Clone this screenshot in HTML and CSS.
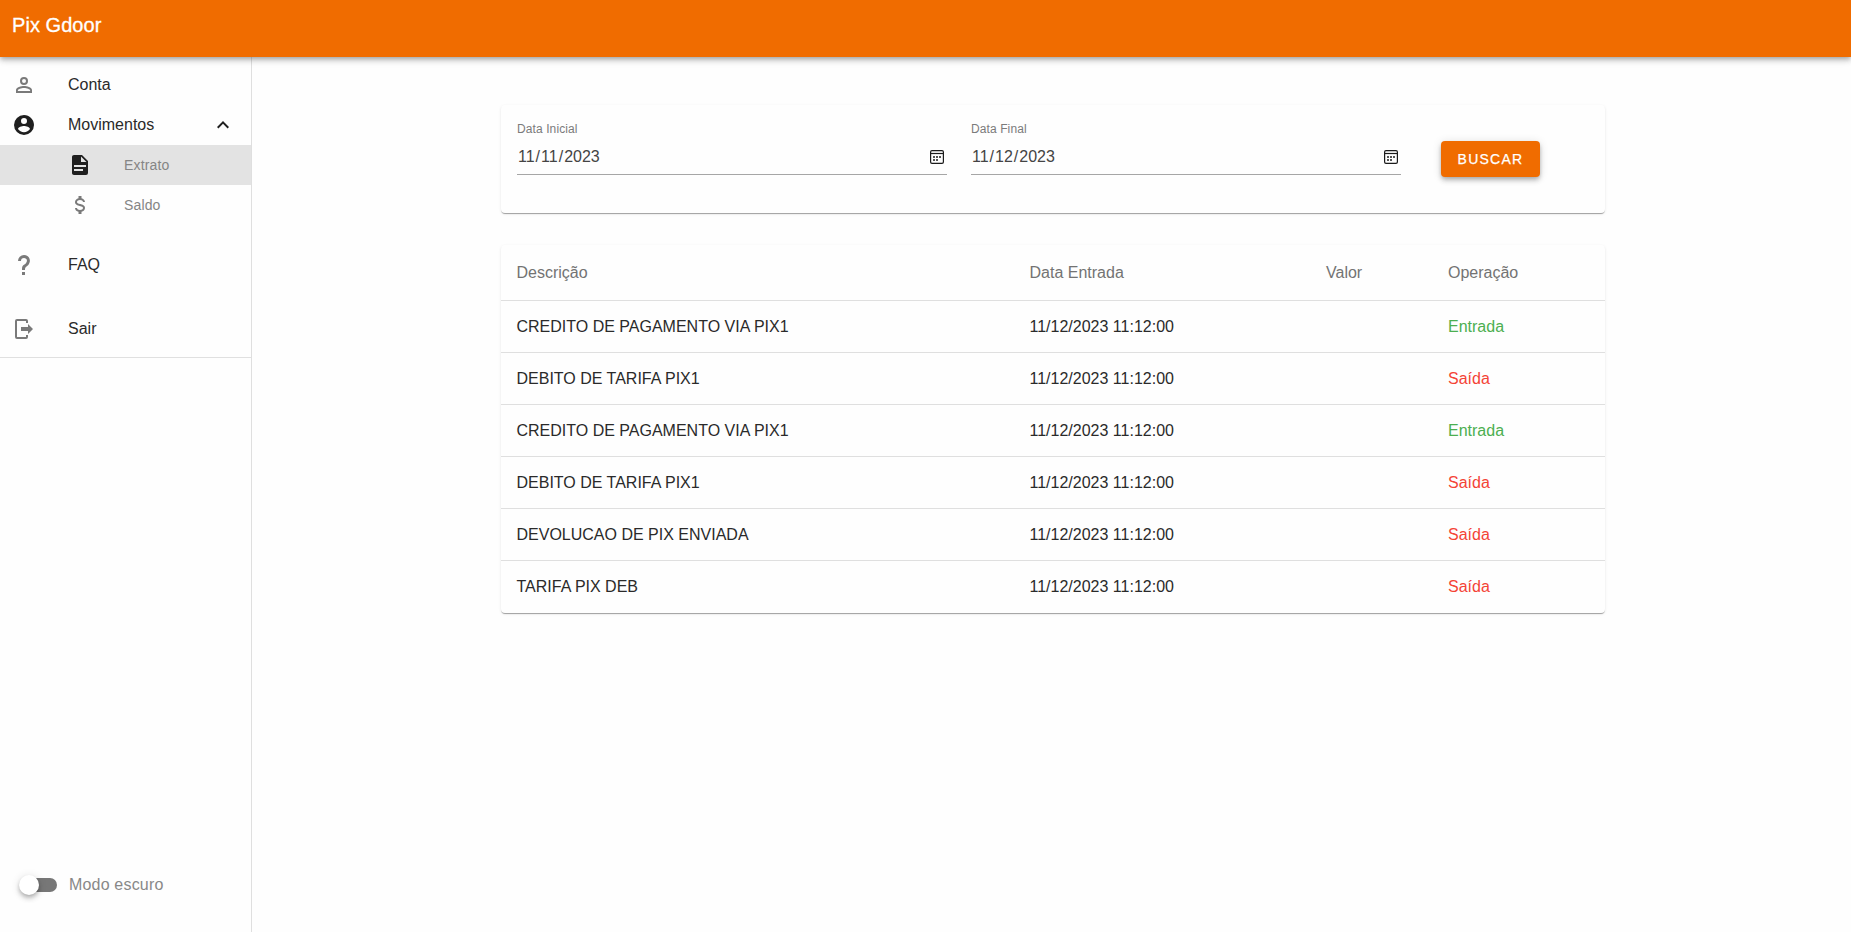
FILE: index.html
```html
<!DOCTYPE html>
<html lang="pt-BR">
<head>
<meta charset="utf-8">
<title>Pix Gdoor</title>
<link rel="stylesheet" href="styles.css">
</head>
<body>
<header class="app-bar"><span class="app-title">Pix Gdoor</span></header>
<div class="layout">
  <aside class="drawer">
    <nav class="menu">
      <a class="item"><svg class="icon muted" viewBox="0 0 24 24"><path d="M12,4A4,4 0 0,1 16,8A4,4 0 0,1 12,12A4,4 0 0,1 8,8A4,4 0 0,1 12,4M12,6A2,2 0 0,0 10,8A2,2 0 0,0 12,10A2,2 0 0,0 14,8A2,2 0 0,0 12,6M12,13C14.67,13 20,14.33 20,17V20H4V17C4,14.33 9.33,13 12,13M12,14.9C9.03,14.9 5.9,16.36 5.9,17V18.1H18.1V17C18.1,16.36 14.97,14.9 12,14.9Z"/></svg><span>Conta</span></a>
      <a class="item"><svg class="icon" viewBox="0 0 24 24"><path d="M12,19.2C9.5,19.2 7.29,17.92 6,16C6.03,14 10,12.9 12,12.9C14,12.9 17.97,14 18,16C16.71,17.92 14.5,19.2 12,19.2M12,5A3,3 0 0,1 15,8A3,3 0 0,1 12,11A3,3 0 0,1 9,8A3,3 0 0,1 12,5M12,2A10,10 0 0,0 2,12A10,10 0 0,0 12,22A10,10 0 0,0 22,12C22,6.47 17.5,2 12,2Z"/></svg><span>Movimentos</span><svg class="icon chevron" viewBox="0 0 24 24"><path d="M7.41,15.41L12,10.83L16.59,15.41L18,14L12,8L6,14L7.41,15.41Z"/></svg></a>
      <a class="item sub active"><svg class="icon" viewBox="0 0 24 24"><path d="M13,9H18.5L13,3.5V9M6,2H14L20,8V20A2,2 0 0,1 18,22H6C4.89,22 4,21.1 4,20V4C4,2.89 4.89,2 6,2M15,18V16H6V18H15M18,14V12H6V14H18Z"/></svg><span>Extrato</span></a>
      <a class="item sub"><svg class="icon muted" viewBox="0 0 24 24"><path d="M7,15H9C9,16.08 10.37,17 12,17C13.63,17 15,16.08 15,15C15,13.9 13.96,13.5 11.76,12.97C9.64,12.44 7,11.78 7,9C7,7.21 8.47,5.69 10.5,5.18V3H13.5V5.18C15.53,5.69 17,7.21 17,9H15C15,7.92 13.63,7 12,7C10.37,7 9,7.92 9,9C9,10.1 10.04,10.5 12.24,11.03C14.36,11.56 17,12.22 17,15C17,16.79 15.53,18.31 13.5,18.82V21H10.5V18.82C8.47,18.31 7,16.79 7,15Z"/></svg><span>Saldo</span></a>
      <a class="item faq"><svg class="icon muted" viewBox="0 0 24 24"><path d="M10,19H13V22H10V19M12,2C17.35,2.22 19.68,7.62 16.5,11.67C15.67,12.67 14.33,13.33 13.67,14.17C13,15 13,16 13,17H10C10,15.33 10,13.92 10.67,12.92C11.33,11.92 12.67,11.33 13.5,10.67C15.92,8.43 15.32,5.26 12,5A3,3 0 0,0 9,8H6A6,6 0 0,1 12,2Z"/></svg><span>FAQ</span></a>
      <a class="item exit"><svg class="icon muted" viewBox="0 0 24 24"><path d="M16 17V14H9V10H16V7L21 12L16 17M14 2A2 2 0 0 1 16 4V6H14V4H5V20H14V18H16V20A2 2 0 0 1 14 22H5A2 2 0 0 1 3 20V4A2 2 0 0 1 5 2H14Z"/></svg><span>Sair</span></a>
    </nav>
    <label class="theme"><span class="switch"><span class="thumb"></span></span><span>Modo escuro</span></label>
  </aside>
  <main class="content">
    <section class="card filters">
      <div class="field"><span class="label">Data Inicial</span><div class="control"><span class="date"><i>11</i>/<i>11</i>/<i>2023</i></span><svg class="calendar" viewBox="0 0 14 14"><rect x=".6" y=".6" width="12.8" height="12.8" rx="1.4"/><path d="M.5 3.5h13"/><path class="dots" d="M6 6h2v2H6zM9 6h2v2H9zM3 6h2v2H3zM3 9h2v2H3zM6 9h2v2H6z"/></svg></div></div>
      <div class="field"><span class="label">Data Final</span><div class="control"><span class="date"><i>11</i>/<i>12</i>/<i>2023</i></span><svg class="calendar" viewBox="0 0 14 14"><rect x=".6" y=".6" width="12.8" height="12.8" rx="1.4"/><path d="M.5 3.5h13"/><path class="dots" d="M6 6h2v2H6zM9 6h2v2H9zM3 6h2v2H3zM3 9h2v2H3zM6 9h2v2H6z"/></svg></div></div>
      <button class="search">BUSCAR</button>
    </section>
    <section class="card statement">
      <div class="row head"><span>Descrição</span><span>Data Entrada</span><span>Valor</span><span>Operação</span></div>
      <div class="row"><span>CREDITO DE PAGAMENTO VIA PIX1</span><span>11/12/2023 11:12:00</span><span></span><span class="in">Entrada</span></div>
      <div class="row"><span>DEBITO DE TARIFA PIX1</span><span>11/12/2023 11:12:00</span><span></span><span class="out">Saída</span></div>
      <div class="row"><span>CREDITO DE PAGAMENTO VIA PIX1</span><span>11/12/2023 11:12:00</span><span></span><span class="in">Entrada</span></div>
      <div class="row"><span>DEBITO DE TARIFA PIX1</span><span>11/12/2023 11:12:00</span><span></span><span class="out">Saída</span></div>
      <div class="row"><span>DEVOLUCAO DE PIX ENVIADA</span><span>11/12/2023 11:12:00</span><span></span><span class="out">Saída</span></div>
      <div class="row"><span>TARIFA PIX DEB</span><span>11/12/2023 11:12:00</span><span></span><span class="out">Saída</span></div>
    </section>
  </main>
</div>
</body>
</html>
```
FILE: styles.css
```css
* { box-sizing: border-box; }
body {
  margin: 0;
  height: 932px;
  display: flex;
  flex-direction: column;
  overflow: hidden;
  background: #fefefe;
  color: #2a2a2a;
  font: 16px/24px "Liberation Sans", Arial, sans-serif;
}
.app-bar {
  position: relative;
  z-index: 1;
  flex: none;
  height: 57px;
  padding: 10px 12px;
  background: #f06c00;
  color: #fff;
  box-shadow: 0 2px 4px -1px rgba(0,0,0,.2), 0 4px 5px rgba(0,0,0,.14), 0 1px 10px rgba(0,0,0,.12);
}
.app-title { font-size: 20px; line-height: 30px; -webkit-text-stroke: .3px #fff; letter-spacing: .05px; }
.layout { flex: 1; display: flex; min-height: 0; }
.drawer {
  width: 252px;
  flex: none;
  display: flex;
  flex-direction: column;
  justify-content: space-between;
  border-right: 1px solid #dfdfdf;
}
.menu { padding: 8px 0; border-bottom: 1px solid #e0e0e0; }
.item {
  display: flex;
  align-items: center;
  gap: 32px;
  height: 40px;
  padding: 0 16px 0 12px;
}
.icon { width: 24px; height: 24px; flex: none; fill: #1f1f1f; }
.muted { fill: #7a7a7a; }
.chevron { margin-left: auto; }
.sub { padding-left: 68px; font-size: 14px; letter-spacing: .15px; color: #858585; }
.active { background: #e3e3e3; }
.faq { margin-top: 20px; }
.exit { margin-top: 24px; }
.theme {
  display: flex;
  align-items: center;
  gap: 12px;
  padding: 0 0 35px 21px;
  color: #888;
  letter-spacing: .18px;
}
.switch {
  position: relative;
  width: 36px;
  height: 14px;
  border-radius: 7px;
  background: #777;
}
.thumb {
  position: absolute;
  top: -3px;
  left: -2px;
  width: 20px;
  height: 20px;
  border-radius: 50%;
  background: #fff;
  box-shadow: 0 2px 4px -1px rgba(0,0,0,.2), 0 4px 5px rgba(0,0,0,.14), 0 1px 10px rgba(0,0,0,.12);
}
.content { flex: 1; padding: 48px 246px 0 249px; }
.card {
  border-radius: 4px;
  background: #fefefe;
  box-shadow: 0 2px 1px -1px rgba(0,0,0,.2), 0 1px 0 rgba(0,0,0,.14), 0 1px 3px rgba(0,0,0,.1);
}
.filters { display: flex; height: 108px; padding: 0 16px; }
.field { width: 430px; margin-right: 24px; padding-top: 14px; }
.label { display: block; font-size: 12px; line-height: 20px; letter-spacing: .1px; color: #7b7b7b; }
.control {
  display: flex;
  align-items: center;
  justify-content: space-between;
  height: 36px;
  padding: 0 3px 0 0;
  border-bottom: 1px solid #a6a6a6;
}
.date { color: #444; }
.date i { font-style: normal; padding: 0 1px; }
.calendar { width: 14px; height: 14px; fill: none; stroke: #1b1b1b; stroke-width: 1.2; }
.calendar .dots { fill: #555; stroke: none; }
.search {
  width: 99px;
  height: 36px;
  margin: 36px 0 0 16px;
  padding: 0;
  border: 0;
  border-radius: 4px;
  background: #f06c00;
  color: #fff;
  font: 500 14px/36px "Liberation Sans", Arial, sans-serif;
  letter-spacing: 1.25px;
  -webkit-text-stroke: .25px #fff;
  box-shadow: 0 2px 4px -1px rgba(0,0,0,.2), 0 4px 5px rgba(0,0,0,.14), 0 1px 10px rgba(0,0,0,.12);
}
.statement { margin-top: 32px; }
.row {
  display: grid;
  grid-template-columns: 513px 296.5px 122px 1fr;
  align-items: center;
  height: 52px;
  padding-left: 15.5px;
  border-bottom: 1px solid #dfdfdf;
}
.row:last-child { border-bottom: 0; }
.head { height: 56px; color: #737373; }
.in { color: #4caf50; }
.out { color: #f44336; }
```
